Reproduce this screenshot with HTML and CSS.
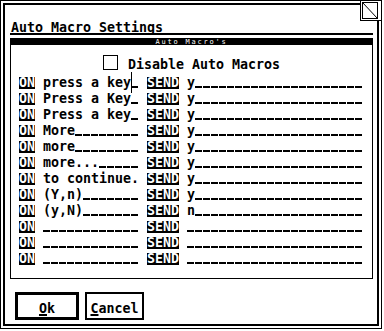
FILE: index.html
```html
<!doctype html>
<html>
<head>
    <title>Auto Macro Settings</title>
    <link rel="stylesheet" href="styles.css">
</head>
<body>
    <div class="window">
        <svg class="full-box" width="22" height="21" viewBox="0 0 22 21">
            <rect x="0" y="0" width="22" height="21" fill="#fff"/>
            <rect x="0.5" y="0.5" width="21" height="20" fill="none" stroke="#000"/>
            <rect x="2.5" y="2.5" width="15" height="16" fill="none" stroke="#000"/>
            <line x1="2.5" y1="2.5" x2="17.5" y2="18.5" stroke="#000"/>
        </svg>
        <div class="frame">
            <div class="dialog-title">Auto Macro Settings</div>
            <div class="group">
                <div class="group-bar">Auto Macro's</div>
                <div class="disable-row">
                    <span class="checkbox"></span>
                    <span class="disable-label">Disable Auto Macros</span>
                </div>
                <div class="macro-list">
                    <div class="macro-row">
                        <span class="tag on">ON</span>
                        <span class="field pattern"><span class="value">press a key</span><span class="cursor"></span><span class="fill"></span></span>
                        <span class="tag send">SEND</span>
                        <span class="field reply"><span class="value">y</span><span class="fill"></span></span>
                    </div>
                    <div class="macro-row">
                        <span class="tag on">ON</span>
                        <span class="field pattern"><span class="value">Press a Key</span><span class="fill"></span></span>
                        <span class="tag send">SEND</span>
                        <span class="field reply"><span class="value">y</span><span class="fill"></span></span>
                    </div>
                    <div class="macro-row">
                        <span class="tag on">ON</span>
                        <span class="field pattern"><span class="value">Press a key</span><span class="fill"></span></span>
                        <span class="tag send">SEND</span>
                        <span class="field reply"><span class="value">y</span><span class="fill"></span></span>
                    </div>
                    <div class="macro-row">
                        <span class="tag on">ON</span>
                        <span class="field pattern"><span class="value">More</span><span class="fill"></span></span>
                        <span class="tag send">SEND</span>
                        <span class="field reply"><span class="value">y</span><span class="fill"></span></span>
                    </div>
                    <div class="macro-row">
                        <span class="tag on">ON</span>
                        <span class="field pattern"><span class="value">more</span><span class="fill"></span></span>
                        <span class="tag send">SEND</span>
                        <span class="field reply"><span class="value">y</span><span class="fill"></span></span>
                    </div>
                    <div class="macro-row">
                        <span class="tag on">ON</span>
                        <span class="field pattern"><span class="value">more...</span><span class="fill"></span></span>
                        <span class="tag send">SEND</span>
                        <span class="field reply"><span class="value">y</span><span class="fill"></span></span>
                    </div>
                    <div class="macro-row">
                        <span class="tag on">ON</span>
                        <span class="field pattern"><span class="value">to continue.</span><span class="fill"></span></span>
                        <span class="tag send">SEND</span>
                        <span class="field reply"><span class="value">y</span><span class="fill"></span></span>
                    </div>
                    <div class="macro-row">
                        <span class="tag on">ON</span>
                        <span class="field pattern"><span class="value">(Y,n)</span><span class="fill"></span></span>
                        <span class="tag send">SEND</span>
                        <span class="field reply"><span class="value">y</span><span class="fill"></span></span>
                    </div>
                    <div class="macro-row">
                        <span class="tag on">ON</span>
                        <span class="field pattern"><span class="value">(y,N)</span><span class="fill"></span></span>
                        <span class="tag send">SEND</span>
                        <span class="field reply"><span class="value">n</span><span class="fill"></span></span>
                    </div>
                    <div class="macro-row">
                        <span class="tag on">ON</span>
                        <span class="field pattern"><span class="fill"></span></span>
                        <span class="tag send">SEND</span>
                        <span class="field reply"><span class="fill"></span></span>
                    </div>
                    <div class="macro-row">
                        <span class="tag on">ON</span>
                        <span class="field pattern"><span class="fill"></span></span>
                        <span class="tag send">SEND</span>
                        <span class="field reply"><span class="fill"></span></span>
                    </div>
                    <div class="macro-row">
                        <span class="tag on">ON</span>
                        <span class="field pattern"><span class="fill"></span></span>
                        <span class="tag send">SEND</span>
                        <span class="field reply"><span class="fill"></span></span>
                    </div>
                </div>
            </div>
            <div class="buttons">
                <button class="btn btn-default"><span class="key">O</span>k</button>
                <button class="btn"><span class="key">C</span>ancel</button>
            </div>
        </div>
    </div>
</body>
</html>
```

FILE: styles.css
```css
body {
    margin: 0;
    background-color: #fff;
    color: #000;
    font-family: "DejaVu Sans Mono", monospace;
    font-size: 13.3px;
    font-weight: bold;
}
.window {
    position: relative;
    width: 382px;
    height: 329px;
    box-sizing: border-box;
    border: 1px solid #000;
    padding: 2px;
}
.full-box {
    position: absolute;
    top: -1px;
    left: 359px;
    display: block;
}
.frame {
    height: 100%;
    box-sizing: border-box;
    border: 2px solid #000;
    padding: 0 4px 0 5px;
}
.dialog-title {
    height: 11px;
    padding: 17px 0 0 1px;
    line-height: 11px;
    border-bottom: 2px solid #000;
    margin-bottom: 3px;
}
.group {
    height: 241px;
    box-sizing: border-box;
    border: 1px solid #000;
}
.group-bar {
    height: 6px;
    background-color: #000;
    color: #fff;
    font-size: 7px;
    font-weight: normal;
    line-height: 6px;
    letter-spacing: 1.8px;
    text-align: center;
}
.disable-row {
    display: flex;
    justify-content: center;
    align-items: flex-start;
    gap: 10px;
    margin-top: 10px;
}
.checkbox {
    width: 15px;
    height: 15px;
    box-sizing: border-box;
    border: 1px solid #000;
}
.disable-label {
    margin-top: 2px;
    line-height: 15px;
}
.macro-list {
    margin-top: 5px;
}
.macro-row {
    display: flex;
    height: 16px;
    padding-left: 8px;
}
.tag {
    height: 12px;
    line-height: 12px;
    background-color: #000;
    color: #fff;
}
.on {
    width: 16px;
}
.send {
    width: 32px;
    margin-left: 8px;
}
.field {
    position: relative;
    display: flex;
    height: 12px;
    line-height: 12px;
    margin-left: 8px;
    white-space: pre;
}
.pattern {
    width: 96px;
}
.reply {
    width: 176px;
}
.fill {
    flex: 1;
    background: repeating-linear-gradient(to right, #000 0 7px, transparent 7px 8px) 0 9px / 100% 2px no-repeat;
}
.cursor {
    position: absolute;
    left: 88px;
    top: -5px;
    width: 1px;
    height: 21px;
    background-color: #000;
}
.buttons {
    display: flex;
    gap: 6px;
    margin-top: 13px;
    padding-left: 5px;
}
.btn {
    display: flex;
    justify-content: center;
    align-items: center;
    width: 59px;
    height: 28px;
    box-sizing: border-box;
    padding: 5px 0 0;
    border: 2px solid #000;
    background-color: #fff;
    color: #000;
    font: inherit;
    line-height: 12px;
}
.btn-default {
    width: 64px;
    border-width: 3px;
}
.key {
    text-decoration: underline;
    text-decoration-thickness: 2px;
    text-underline-offset: 1px;
}
```
